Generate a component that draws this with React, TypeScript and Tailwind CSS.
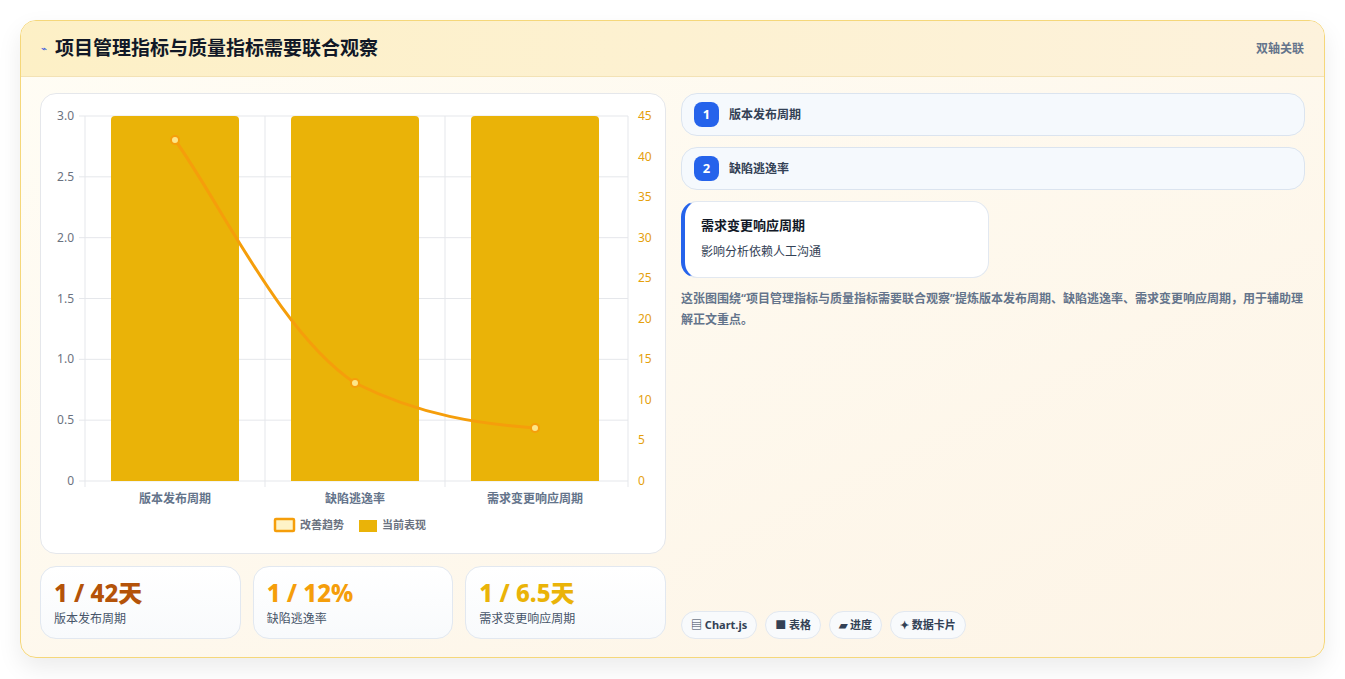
import React from 'react';

const cats = ['版本发布周期', '缺陷逃逸率', '需求变更响应周期'];
const leftTicks = ['3.0', '2.5', '2.0', '1.5', '1.0', '0.5', '0'];
const rightTicks = ['45', '40', '35', '30', '25', '20', '15', '10', '5', '0'];

const Chart = () => {
  const top = 22, bottom = 387, left = 44, right = 587;
  const h = bottom - top;
  const bars = [70, 250, 430];
  const pts = [[134, 46], [314, 289], [494, 334]];
  return (
    <svg width="625" height="450" className="block">
      {leftTicks.map((t, i) => {
        const y = top + (h / 6) * i;
        return (
          <g key={t}>
            <line x1={left - 6} x2={right} y1={y} y2={y} stroke="#e5e7eb" />
            <text x={33} y={y + 4} textAnchor="end" fontSize="12" fill="#6b7280">{t}</text>
          </g>
        );
      })}
      {rightTicks.map((t, i) => (
        <text key={t} x={597} y={top + (h / 9) * i + 4} fontSize="12" fill="#e5a00d">{t}</text>
      ))}
      {[44, 224, 404, 587].map(x => (
        <line key={x} x1={x} x2={x} y1={top} y2={bottom + 6} stroke="#e5e7eb" />
      ))}
      {bars.map(x => (
        <path key={x} d={`M${x} ${bottom} V${top + 4} Q${x} ${top} ${x + 4} ${top} H${x + 124} Q${x + 128} ${top} ${x + 128} ${top + 4} V${bottom} Z`} fill="#eab308" />
      ))}
      <path d={`M${pts[0][0]} ${pts[0][1]} C180 110 240 240 ${pts[1][0]} ${pts[1][1]} C380 322 440 330 ${pts[2][0]} ${pts[2][1]}`} fill="none" stroke="#f59e0b" strokeWidth="3" />
      {pts.map(([x, y]) => (
        <circle key={x} cx={x} cy={y} r="4" fill="#fde68a" stroke="#f59e0b" strokeWidth="2" />
      ))}
      {cats.map((c, i) => (
        <text key={c} x={134 + i * 180} y={409} textAnchor="middle" fontSize="12" fontWeight="600" fill="#64748b">{c}</text>
      ))}
      <rect x={234} y={425} width={19} height={12} fill="#fef3c7" stroke="#f59e0b" strokeWidth="2.5" rx="1" />
      <text x={259} y={435} fontSize="11" fontWeight="600" fill="#6b7280">改善趋势</text>
      <rect x={318} y={426} width={18} height={12} fill="#eab308" />
      <text x={341} y={435} fontSize="11" fontWeight="600" fill="#6b7280">当前表现</text>
    </svg>
  );
};

const Stat = ({ v, l, c }: { v: string; l: string; c: string }) => (
  <div className="flex-1 h-[73px] rounded-2xl border border-[#e2e8f0] bg-gradient-to-b from-white to-[#f8fafc] px-[13px] pt-[11px]">
    <div className={`text-[24px] leading-[30px] font-extrabold ${c}`}>{v}</div>
    <div className="text-[12px] text-[#475569] mt-[2px]">{l}</div>
  </div>
);

export default function App() {
  return (
    <div className="w-[1345px] h-[679px] bg-white pt-[20px] px-[20px]" style={{ fontFamily: '"Noto Sans", "Noto Sans CJK SC", sans-serif' }}>
      <div className="h-[638px] rounded-2xl border border-[#f5d77a] bg-gradient-to-br from-[#fffdf5] to-[#fdf4e6] shadow-[0_10px_25px_rgba(0,0,0,0.08)] overflow-hidden flex flex-col">
        <div className="h-[56px] shrink-0 flex items-center justify-between px-[20px] bg-gradient-to-r from-[#fdf0c6] to-[#fdf2dc] border-b border-[#f3e2b5]">
          <div className="flex items-center gap-[8px]">
            <span className="text-[10px] text-[#3b5bdb]">⌁</span>
            <span className="text-[19px] font-bold text-[#111827]">项目管理指标与质量指标需要联合观察</span>
          </div>
          <span className="text-[12px] font-semibold text-[#64748b]">双轴关联</span>
        </div>
        <div className="flex-1 flex gap-[15px] px-[19px] pt-[16px] pb-[18px]">
          <div className="w-[626px] flex flex-col gap-[12px]">
            <div className="h-[461px] rounded-2xl border border-[#e5e7eb] bg-white overflow-hidden">
              <Chart />
            </div>
            <div className="flex gap-[12px]">
              <Stat v="1 / 42天" l="版本发布周期" c="text-[#b45309]" />
              <Stat v="1 / 12%" l="缺陷逃逸率" c="text-[#f59e0b]" />
              <Stat v="1 / 6.5天" l="需求变更响应周期" c="text-[#eab308]" />
            </div>
          </div>
          <div className="flex-1 flex flex-col">
            {['版本发布周期', '缺陷逃逸率'].map((t, i) => (
              <div key={t} className="h-[43px] mb-[11px] rounded-2xl border border-[#dbe4ef] bg-[#f5f9fd] flex items-center gap-[10px] px-[12px]">
                <span className="w-[25px] h-[25px] rounded-lg bg-[#2563eb] text-white text-[13px] font-bold flex items-center justify-center">{i + 1}</span>
                <span className="text-[12px] font-semibold text-[#334155]">{t}</span>
              </div>
            ))}
            <div className="w-[308px] h-[77px] rounded-2xl border border-[#e2e8f0] border-l-4 border-l-[#2563eb] bg-white px-[16px] pt-[14px]">
              <div className="text-[13px] font-bold text-[#111827]">需求变更响应周期</div>
              <div className="text-[12px] text-[#334155] mt-[7px]">影响分析依赖人工沟通</div>
            </div>
            <p className="mt-[10px] text-[12px] leading-[21px] font-semibold text-[#64748b]">这张图围绕“项目管理指标与质量指标需要联合观察”提炼版本发布周期、缺陷逃逸率、需求变更响应周期，用于辅助理解正文重点。</p>
            <div className="mt-auto flex gap-[8px]">
              {['▤ Chart.js', '■ 表格', '▰ 进度', '✦ 数据卡片'].map(c => (
                <span key={c} className="h-[28px] px-[9px] rounded-full border border-[#e2e8f0] bg-[#f8fafc] text-[11px] font-bold text-[#334155] flex items-center">{c}</span>
              ))}
            </div>
          </div>
        </div>
      </div>
    </div>
  );
}
